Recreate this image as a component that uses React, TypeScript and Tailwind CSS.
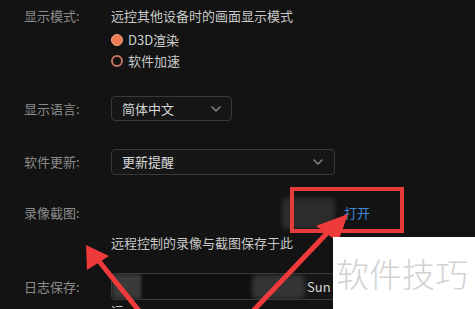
import React from "react";

const font = { fontFamily: '"Noto Sans CJK SC", "Noto Sans", sans-serif' };

function Chevron() {
  return (
    <svg width="10" height="6" viewBox="0 0 10 6" fill="none">
      <path d="M1 1L5 5L9 1" stroke="#8a8a8a" strokeWidth="1.4" strokeLinecap="round" strokeLinejoin="round" />
    </svg>
  );
}

function Label({ children }: { children: React.ReactNode }) {
  return <div className="w-[87px] shrink-0 text-[13px] leading-[20px] text-[#8a8a8a]">{children}</div>;
}

export default function App() {
  return (
    <div className="relative w-[475px] h-[309px] overflow-hidden bg-[#131313]" style={font}>
      <div className="flex flex-col pl-[24px] pt-[6px]">
        {/* 显示模式 */}
        <div className="flex">
          <Label>显示模式:</Label>
          <div className="flex flex-col">
            <div className="text-[13px] leading-[20px] text-[#c8c8c8]">远控其他设备时的画面显示模式</div>
            <div className="mt-[4px] flex items-center h-[20px]">
              <span className="w-[12px] h-[12px] rounded-full bg-[#ee7c56] border-[1.5px] border-[#f5a283]" />
              <span className="ml-[5px] text-[13px] text-[#d0d0d0]">D3D渲染</span>
            </div>
            <div className="mt-[1px] flex items-center h-[20px]">
              <span className="w-[12px] h-[12px] rounded-full border-[2px] border-[#c27560]" />
              <span className="ml-[5px] text-[13px] text-[#c8c8c8]">软件加速</span>
            </div>
          </div>
        </div>

        {/* 显示语言 */}
        <div className="flex items-center mt-[25px]">
          <Label>显示语言:</Label>
          <div className="flex items-center justify-between w-[121px] h-[25px] rounded-[4px] border border-[#3a3a3a] bg-[#161616] pl-[10px] pr-[10px]">
            <span className="text-[13px] text-[#d6d6d6]">简体中文</span>
            <Chevron />
          </div>
        </div>

        {/* 软件更新 */}
        <div className="flex items-center mt-[28px]">
          <Label>软件更新:</Label>
          <div className="flex items-center justify-between w-[224px] h-[26px] rounded-[4px] border border-[#3a3a3a] bg-[#161616] pl-[10px] pr-[11px]">
            <span className="text-[13px] text-[#d6d6d6]">更新提醒</span>
            <Chevron />
          </div>
        </div>

        {/* 录像截图 */}
        <div className="flex items-center mt-[22px] h-[32px]">
          <Label>录像截图:</Label>
          <div className="flex w-[224px] justify-end">
            <div className="w-[53px] h-[31px] rounded-[4px] bg-[#2c2c2c] blur-[2px]" />
          </div>
          <span className="ml-[9px] text-[13px] text-[#3d86d8]">打开</span>
        </div>
        <div className="flex mt-[4px]">
          <div className="w-[87px] shrink-0" />
          <div className="text-[13px] leading-[20px] text-[#c8c8c8]">远程控制的录像与截图保存于此</div>
        </div>

        {/* 日志保存 */}
        <div className="flex items-center mt-[20px]">
          <Label>日志保存:</Label>
          <div className="relative flex items-center w-[224px] h-[27px] rounded-[4px] border border-[#3a3a3a] bg-[#161616] overflow-hidden">
            <div className="w-[30px] h-full bg-[#3a3a3a] blur-[2px]" />
            <div className="w-[110px] h-full bg-[#101010] blur-[1px]" />
            <div className="w-[53px] h-[24px] rounded-[6px] bg-[#343434] blur-[2px]" />
            <span className="ml-[2px] text-[13px] text-[#d8d8d8]">Sun</span>
          </div>
        </div>
        <div className="flex mt-[1px]">
          <div className="w-[87px] shrink-0" />
          <div className="text-[13px] leading-[20px] text-[#c4c4c4]">远</div>
        </div>
      </div>

      {/* annotation: red box */}
      <div className="absolute left-[290px] top-[187px] w-[114px] h-[46px] border-[4px] border-[#e63b3b]" />

      {/* annotation: arrows */}
      <svg className="absolute left-0 top-0" width="475" height="309" viewBox="0 0 475 309">
        <line x1="140" y1="312" x2="98" y2="260" stroke="#ee3a3a" strokeWidth="5" />
        <polygon points="86,245 87,270 109,256" fill="#ee3a3a" />
        <line x1="252" y1="312" x2="330" y2="230" stroke="#ee3a3a" strokeWidth="5" />
        <polygon points="348,214 316,226 338,242" fill="#ee3a3a" />
      </svg>

      {/* watermark */}
      <div className="absolute left-[333px] top-[237px] w-[142px] h-[72px] bg-white flex items-center pl-[3px]">
        <span className="text-[33px] leading-none text-[#d2d2d2]" style={{ fontFamily: '"Noto Sans CJK SC", sans-serif', fontWeight: 300 }}>
          软件技巧
        </span>
      </div>
    </div>
  );
}
